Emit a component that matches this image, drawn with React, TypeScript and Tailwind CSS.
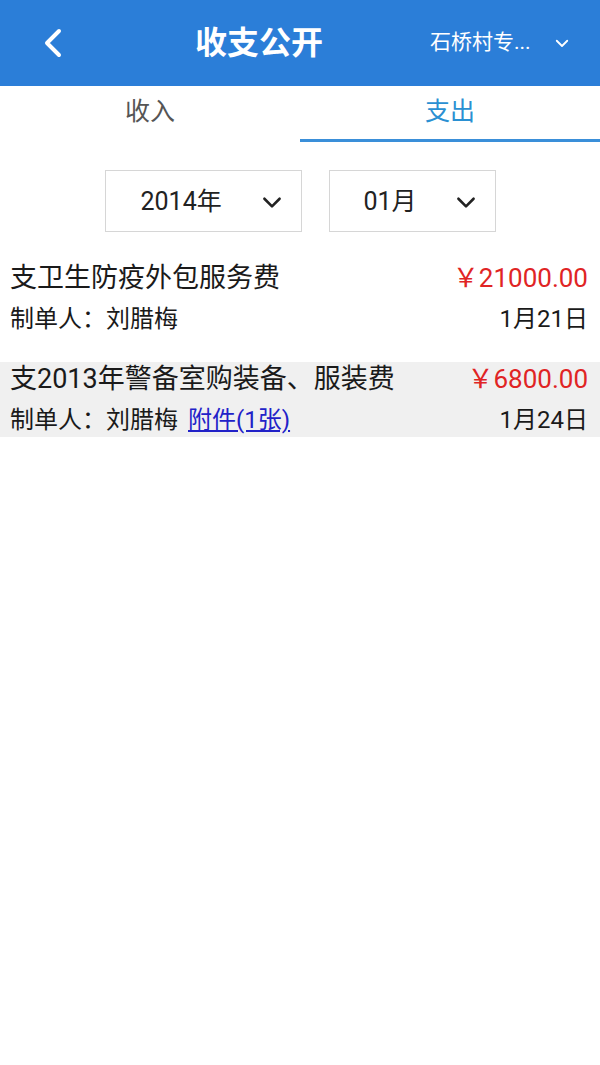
import { useState } from "react";

interface Record {
  id: number;
  title: string;
  amount: string;
  maker: string;
  date: string;
  attachment?: string;
}

const records: Record[] = [
  { id: 1, title: "支卫生防疫外包服务费", amount: "￥21000.00", maker: "刘腊梅", date: "1月21日" },
  {
    id: 2,
    title: "支2013年警备室购装备、服装费",
    amount: "￥6800.00",
    maker: "刘腊梅",
    date: "1月24日",
    attachment: "附件(1张)",
  },
];

function Chevron({ className }: { className?: string }) {
  return (
    <svg viewBox="0 0 24 24" className={className} fill="none" stroke="currentColor" strokeWidth={2.4} strokeLinecap="round" strokeLinejoin="round">
      <path d="M5 9l7 7 7-7" />
    </svg>
  );
}

export default function App() {
  const [tab, setTab] = useState<"in" | "out">("out");

  return (
    <main
      className="w-[600px] min-h-[1065px] bg-white"
      style={{ fontFamily: 'Roboto, "Noto Sans CJK SC", sans-serif' }}
    >
      <header className="h-[86px] bg-[#2b7ed8] flex items-center text-white">
        <button className="w-[110px] h-full flex items-center pl-[43px]">
          <svg viewBox="0 0 20 30" className="w-[20px] h-[30px]" fill="none" stroke="white" strokeWidth={4} strokeLinecap="round" strokeLinejoin="round">
            <path d="M16 3L4 15l12 12" />
          </svg>
        </button>
        <h1 className="w-[300px] text-center text-[32px] font-bold pr-[2px]">收支公开</h1>
        <div className="flex-1 flex items-center pl-[20px]">
          <span className="text-[21px]">石桥村专...</span>
          <Chevron className="w-[18px] h-[18px] ml-[22px]" />
        </div>
      </header>

      <nav className="h-[56px] flex">
        <button
          onClick={() => setTab("in")}
          className={`flex-1 flex items-center justify-center text-[25px] pb-[4px] ${tab === "in" ? "text-[#2a90d2] border-b-[3px] border-[#3a8fd9]" : "text-[#555]"}`}
        >
          收入
        </button>
        <button
          onClick={() => setTab("out")}
          className={`flex-1 flex items-center justify-center text-[25px] pb-[1px] ${tab === "out" ? "text-[#2a90d2] border-b-[3px] border-[#3a8fd9]" : "text-[#555]"}`}
        >
          支出
        </button>
      </nav>

      <section className="flex justify-center gap-[27px] mt-[28px]">
        <div className="w-[197px] h-[62px] border border-[#d6d6d6] flex items-center justify-between pl-[35px] pr-[16px] pt-[2px] text-[25px] text-[#222]">
          <span>2014年</span>
          <Chevron className="w-[26px] h-[26px]" />
        </div>
        <div className="w-[167px] h-[62px] border border-[#d6d6d6] flex items-center justify-between pl-[34px] pr-[16px] pt-[2px] text-[25px] text-[#222]">
          <span>01月</span>
          <Chevron className="w-[26px] h-[26px]" />
        </div>
      </section>

      <section className="mt-[29px]">
        {records.map((r, i) => (
          <article
            key={r.id}
            className={`px-[10px] pb-[1px] ${i % 2 === 1 ? "bg-[#f0f0f0] mt-[26px]" : ""}`}
          >
            <div className="h-[34px] flex items-center justify-between">
              <span className="text-[27px] text-[#1a1a1a]">{r.title}</span>
              <span className="text-[26px] text-[#e02424] pr-[2px]">{r.amount}</span>
            </div>
            <div className="h-[32px] mt-[8px] flex items-center justify-between text-[24px] text-[#1a1a1a]">
              <span>
                制单人：{r.maker}
                {r.attachment && (
                  <a href="#" className="ml-[10px] text-[#2222c8] underline">
                    {r.attachment}
                  </a>
                )}
              </span>
              <span className="pr-[2px]">{r.date}</span>
            </div>
          </article>
        ))}
      </section>
    </main>
  );
}
